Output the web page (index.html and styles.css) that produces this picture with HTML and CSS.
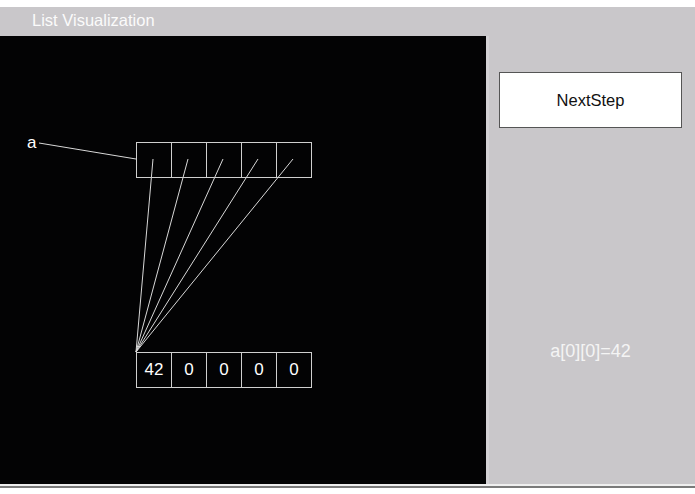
FILE: index.html
```html
<!DOCTYPE html>
<html lang="en">
<head>
  <meta charset="UTF-8">
  <title>List Visualization</title>
  <link rel="stylesheet" href="styles.css">
</head>
<body>
  <div class="window">
    <div class="titlebar">List Visualization</div>

    <div class="main">
      <div class="canvas">
        <svg class="links" width="486" height="448" viewBox="0 36 486 448">
          <!-- name -> outer list -->
          <line x1="39" y1="143" x2="136" y2="159" />
          <!-- outer slots -> inner list -->
          <line x1="153" y1="159" x2="136" y2="352" />
          <line x1="188" y1="159" x2="136" y2="352" />
          <line x1="223" y1="159" x2="136" y2="352" />
          <line x1="258" y1="159" x2="136" y2="352" />
          <line x1="293" y1="159" x2="136" y2="352" />
        </svg>

        <div class="var-name">a</div>

        <div class="cells outer">
          <div class="cell"></div>
          <div class="cell"></div>
          <div class="cell"></div>
          <div class="cell"></div>
          <div class="cell"></div>
        </div>

        <div class="cells inner">
          <div class="cell">42</div>
          <div class="cell">0</div>
          <div class="cell">0</div>
          <div class="cell">0</div>
          <div class="cell">0</div>
        </div>
      </div>

      <div class="panel">
        <button class="next-btn">NextStep</button>
        <div class="status">a[0][0]=42</div>
      </div>
    </div>

    <div class="bottom-edge"></div>
  </div>
</body>
</html>
```

FILE: styles.css
```css
html, body {
  margin: 0;
  padding: 0;
  background: #fff;
}

body {
  font-family: "Liberation Sans", Arial, sans-serif;
  padding-top: 7px;
}

.window {
  width: 695px;
}

.titlebar {
  height: 29px;
  box-sizing: border-box;
  padding-left: 32px;
  line-height: 27px;
  font-size: 16.5px;
  color: #fbfbfb;
  background: #c9c7ca;
}

.main {
  display: flex;
  height: 448px;
}

.canvas {
  position: relative;
  width: 486px;
  height: 448px;
  background: #030304;
  color: #fff;
}

.links {
  position: absolute;
  top: 0;
  left: 0;
}

.links line {
  stroke: #d8d8d8;
  stroke-width: 1;
}

.var-name {
  position: absolute;
  left: 27px;
  top: 97px;
  font-size: 17px;
  line-height: 20px;
}

.cells {
  position: absolute;
  left: 136px;
  display: flex;
  border-left: 1px solid #cfcfcf;
}

.outer {
  top: 106px;
}

.inner {
  top: 316px;
}

.cell {
  width: 34px;
  height: 34px;
  border: 1px solid #cfcfcf;
  border-left: none;
  display: flex;
  align-items: center;
  justify-content: center;
  font-size: 17px;
  color: #fff;
}

.panel {
  flex: 1;
  background: #c9c7ca;
  border-left: 3px solid #d3d1d4;
  display: flex;
  flex-direction: column;
  align-items: center;
}

.next-btn {
  margin-top: 36px;
  width: 183px;
  height: 56px;
  margin-left: -3px;
  background: #fff;
  border: 1px solid #555;
  border-radius: 0;
  font-family: "Liberation Sans", Arial, sans-serif;
  font-size: 16.5px;
  color: #111;
}

.status {
  margin-top: 213px;
  margin-left: -3px;
  font-size: 18px;
  color: #f4f4f4;
}

.bottom-edge {
  height: 2px;
  background: #efefef;
  border-bottom: 2px solid #7a7a7a;
}
```
